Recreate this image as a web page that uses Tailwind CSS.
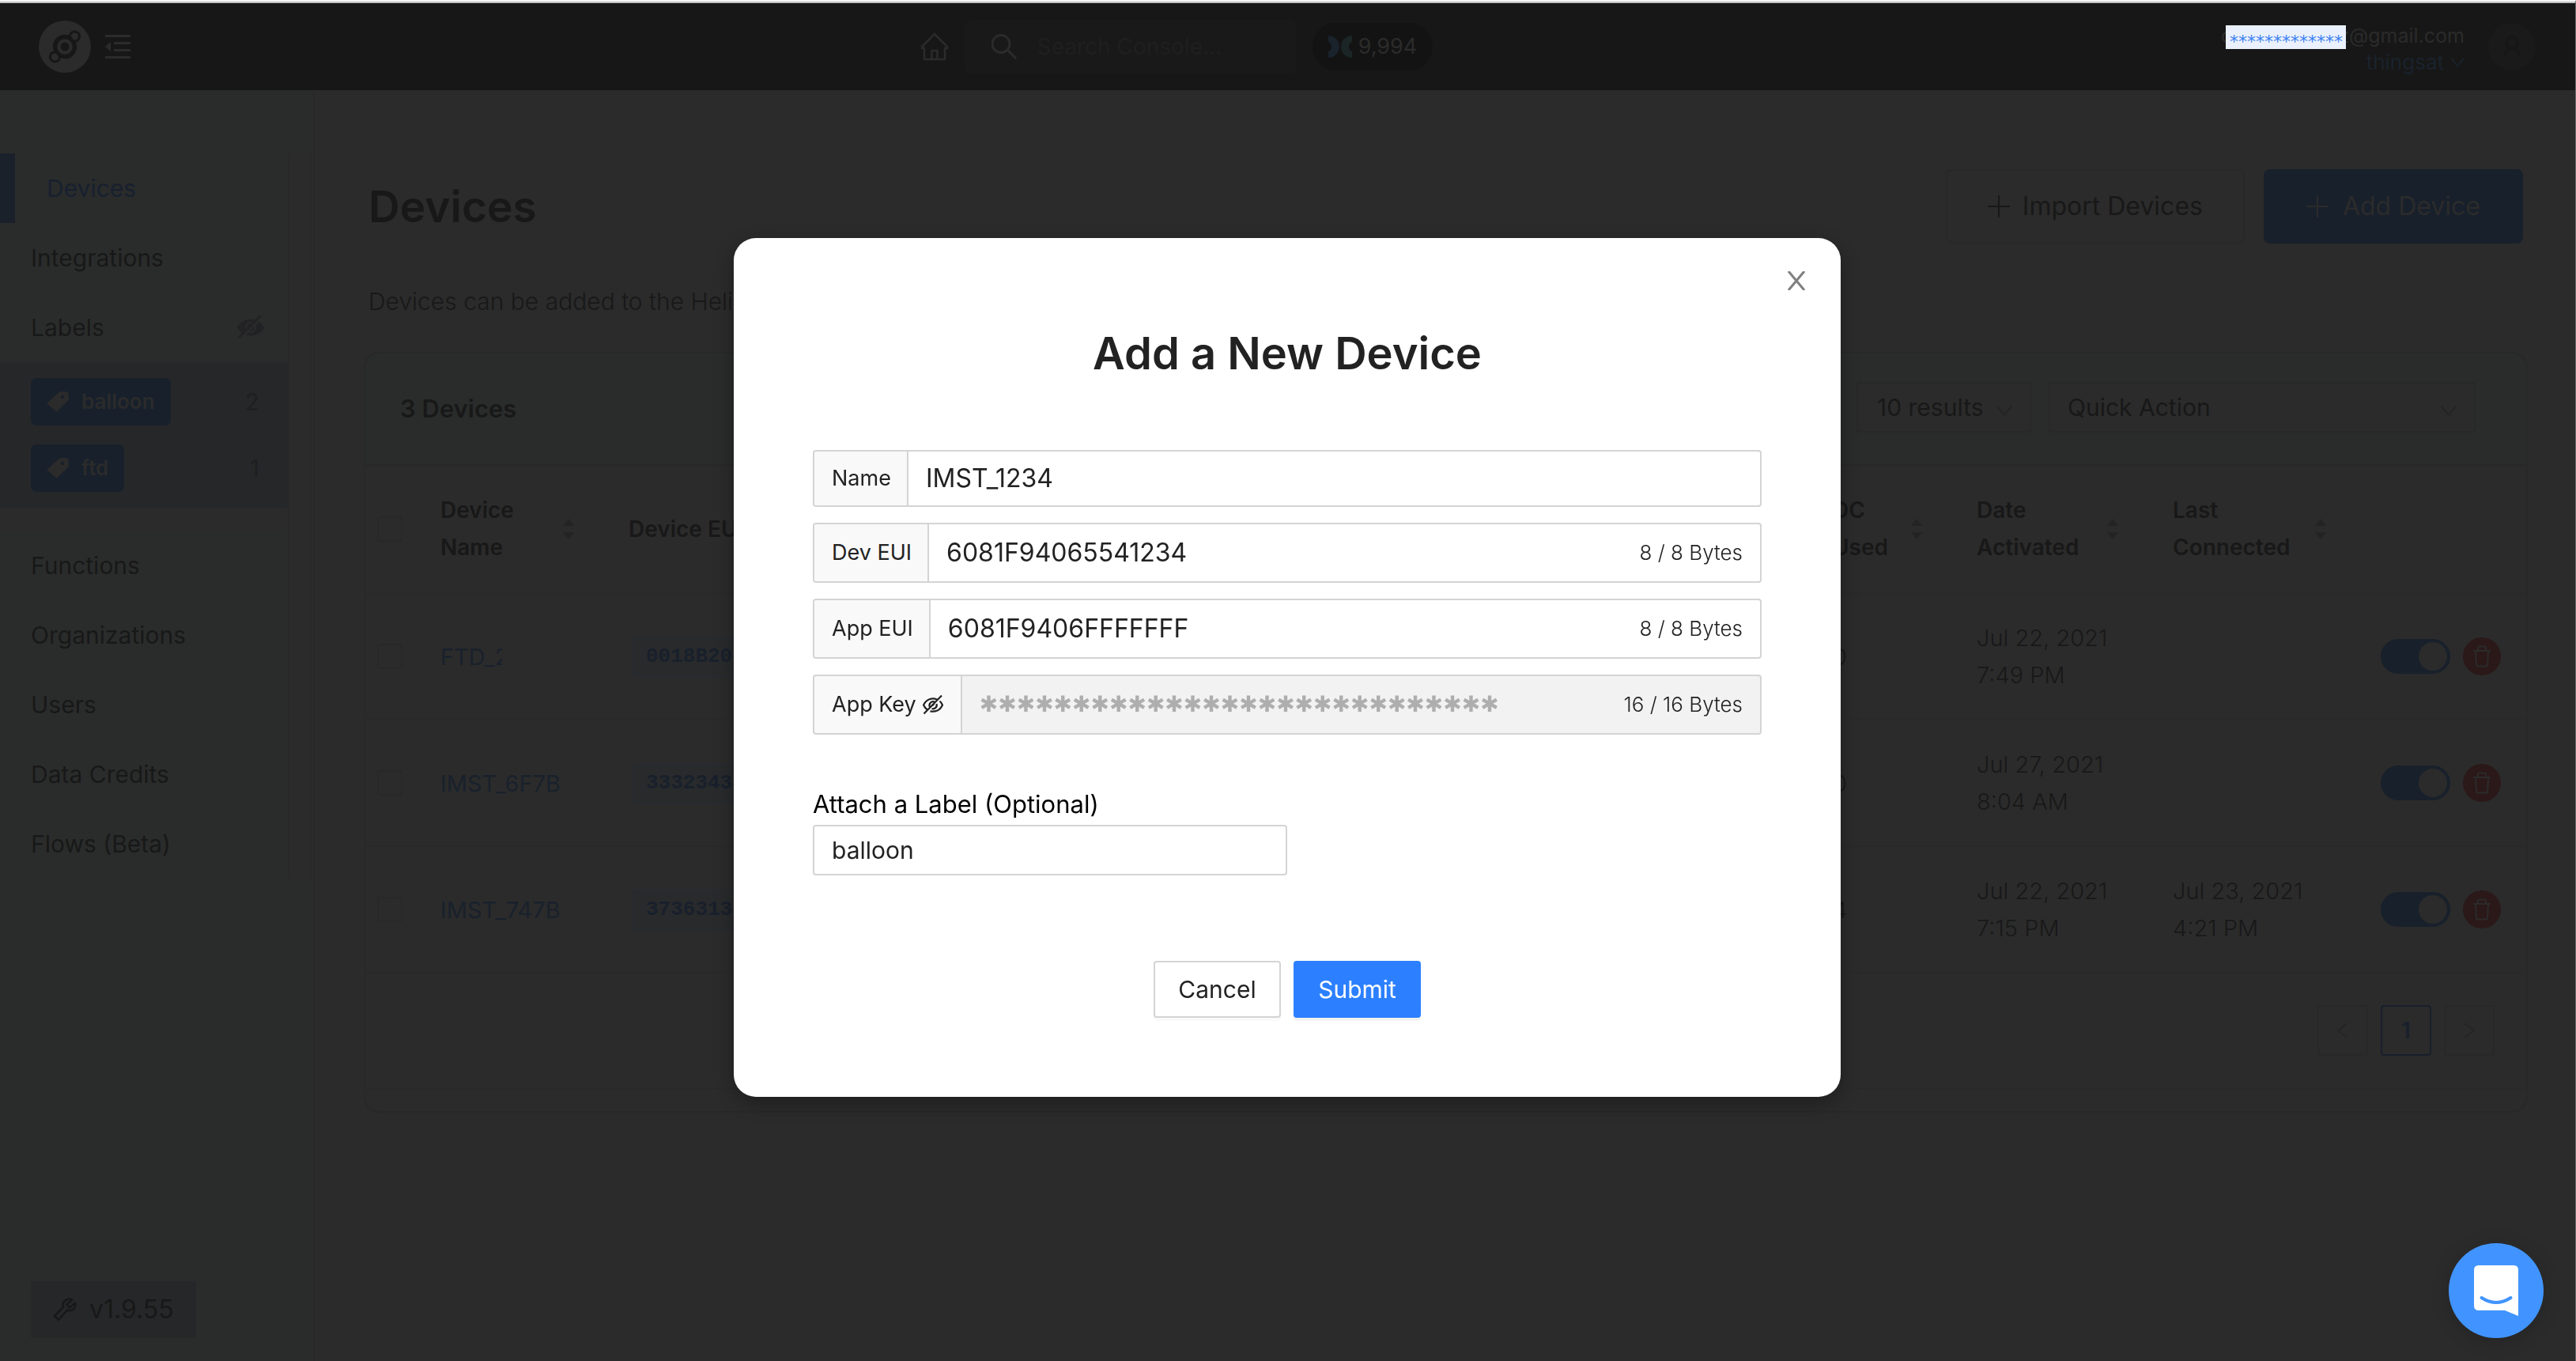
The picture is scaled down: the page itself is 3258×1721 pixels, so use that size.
<!DOCTYPE html>
<html lang="en">
<head>
<meta charset="utf-8">
<title>Console - Devices</title>
<script src="https://cdn.jsdelivr.net/npm/@tailwindcss/browser@4"></script>
</head>
<body class="flex min-h-screen flex-col border-t-2 border-r border-t-[#f4f4f4] border-r-[#6b6b6b] bg-[#2b2b2b] font-['Inter',sans-serif] text-[30px] leading-[48px] text-[#181818]">

<svg class="hidden">
  <symbol id="chevron" viewBox="0 0 20 14"><path d="M1 1l9 11 9-11" fill="none" stroke="currentColor" stroke-width="2"/></symbol>
  <symbol id="sort" viewBox="0 0 14 26"><path d="M7 0l7 9H0zM7 26l7-9H0z" fill="currentColor"/></symbol>
  <symbol id="plus" viewBox="0 0 28 28"><path d="M14 0v28M0 14h28" fill="none" stroke="currentColor" stroke-width="2"/></symbol>
  <symbol id="tag" viewBox="0 0 28 26"><path d="M0 15L15 1.500Q16.500 0 18.500 0L25 .3Q27.500.5 27.600 3L28 9Q28 11 26.500 12.500L12.500 26z" fill="currentColor"/><circle cx="20" cy="7" r="2.200" fill="#18202b"/></symbol>
  <symbol id="trash" viewBox="0 0 24 28"><path d="M7 6V3q0-1.500 1.500-1.500h7Q17 1.500 17 3v3M1 7h22M4 8l1 17q0 1.500 1.500 1.500h11Q19 26.500 19 25l1-17" fill="none" stroke="currentColor" stroke-width="2"/></symbol>
</svg>

<header class="flex h-[112px] shrink-0 items-center justify-between border-t-2 border-[#c0c0c0] bg-[#171717] pr-[50px] pl-[49px]">
  <div class="flex flex-1 items-center gap-[18px]">
    <a href="#" aria-label="Console home">
      <svg class="size-[66px]" viewBox="0 0 66 66"><circle cx="33" cy="33" r="33" fill="#2b2b2b"/><g fill="none" stroke="#171717" stroke-linecap="round"><circle cx="33" cy="33" r="5.500" fill="#171717" stroke="none"/><path d="M40 21.800A13 13 0 0 0 20.600 37M26 44.200A13 13 0 0 0 45.400 29" stroke-width="4"/><circle cx="33" cy="33" r="12" stroke-width="4.500"/><path d="M39.500 19.500c.5-3 2-5 5.200-5.500a6 6 0 0 1 6.500 8c-1 3-3.500 4-6 4M26.500 46.500c-.5 3-2 5-5.200 5.500a6 6 0 0 1-6.500-8c1-3 3.500-4 6-4" stroke-width="3"/></g></svg>
    </a>
    <button type="button" aria-label="Collapse menu" class="text-[#2b2b2b]">
      <svg class="h-[30px] w-8" viewBox="0 0 32 30" fill="currentColor"><path d="M0 0h32v3H0zM11 9h21v3H11zM11 18h21v3H11zM0 27h32v3H0zM0 15l7-6v12z"/></svg>
    </button>
  </div>
  <div class="mr-[280px] flex items-center gap-5">
    <a href="#" aria-label="Home" class="text-[#2b2b2b]">
      <svg class="size-9" viewBox="0 0 36 36" fill="none" stroke="currentColor" stroke-width="2.500"><path d="M5 20H2v-2L18 2l16 16v2h-3v14H5zM14.500 34V23h7v11"/></svg>
    </a>
    <label class="flex h-[68px] w-[420px] items-center gap-[26px] rounded-lg bg-[#191919] pl-[34px]">
      <svg class="size-8 shrink-0 text-[#2b2b2b]" viewBox="0 0 32 32" fill="none" stroke="currentColor" stroke-width="3"><circle cx="12" cy="12.500" r="11"/><path d="M20 20l11 11"/></svg>
      <input type="search" placeholder="Search Console..." class="w-full min-w-0 bg-transparent text-[28px] placeholder:text-[#1f1f1f]">
    </label>
    <div class="flex h-[60px] items-center gap-2 rounded-full bg-[#131313] px-5 text-[27px] text-[#2b2b2b]">
      <svg class="h-7 w-[30px]" viewBox="0 0 30 28"><path d="M0 0a14 14 0 0 1 0 28v-8a6.500 6.500 0 0 0 0-12z" fill="#1a222c"/><path d="M30 0a14 14 0 0 0 0 28v-8a6.500 6.500 0 0 1 0-12z" fill="#1b2526"/></svg>
      9,994
    </div>
  </div>
  <div class="flex flex-1 items-center justify-end gap-[30px]">
    <div class="flex flex-col items-end pt-1.5 text-[26px] leading-[34px]">
      <div class="flex h-[34px] text-[25px] text-[#2b2b2b]">
        <span class="w-[6px] overflow-hidden">c</span>
        <span class="mt-1 flex w-[152px] justify-end bg-[#eaf1fd] pr-1 font-['DejaVu_Sans',sans-serif] text-[22px] leading-[42px] text-[#3b7ff0]">*************</span>
        <span class="flex w-[4px] justify-end overflow-hidden">z</span>
        <span>@gmail.com</span>
      </div>
      <button type="button" class="flex items-center gap-2 text-[#1a222c]">thingsat <svg class="h-3 w-[18px]"><use href="#chevron"/></svg></button>
    </div>
    <button type="button" aria-label="Account" class="flex size-[60px] items-center justify-center rounded-full bg-[#1a1a1a]">
      <svg class="h-7 w-[22px]" viewBox="0 0 22 28" fill="none" stroke="#171717" stroke-width="4"><circle cx="11" cy="9" r="7"/><path d="M2 27c0-6 3-10 9-10s9 4 9 10"/></svg>
    </button>
  </div>
</header>

<div class="flex flex-1">
  <aside class="flex w-[398px] shrink-0 flex-col justify-between border-r-2 border-[#282828] bg-[#2a2c2b] pt-20 pb-[29px]">
    <nav class="mr-[2px] border-r-2 border-[#282828] bg-[#2b2b2b] pr-[26px]">
      <div class="border-r-2 border-[#282828]">
        <ul class="bg-[#2a2c2b]">
          <li><a href="#" class="flex h-[88px] items-center border-l-[19px] border-[#1a212b] pl-10 text-[#18202f]">Devices</a></li>
          <li><a href="#" class="flex h-[88px] items-center pl-[39px]">Integrations</a></li>
          <li class="flex h-[88px] items-center justify-between pr-[30px] pl-[39px]"><a href="#">Labels</a>
            <button type="button" aria-label="Hide labels" class="text-[#222224]"><svg class="h-[30px] w-[34px]" viewBox="0 0 34 30"><path d="M0 15C7 1 27 1 34 15 27 29 7 29 0 15z" fill="currentColor"/><circle cx="17" cy="15" r="6" fill="none" stroke="#2a2c2b" stroke-width="2"/><path d="M5 29L33 1" stroke="#2a2c2b" stroke-width="2"/><path d="M2 28L30 0" stroke="currentColor" stroke-width="3"/></svg></button>
          </li>
        </ul>
        <ul class="flex flex-col gap-6 bg-[#262729] py-5 pr-9 pl-[39px] text-[#1e1f20]">
          <li class="flex items-center justify-between"><a href="#" class="flex h-[60px] items-center gap-4 rounded-[7px] bg-[#18202b] px-5 text-[26px] font-semibold text-[#2b2b2b]"><svg class="h-[26px] w-7"><use href="#tag"/></svg>balloon</a>2</li>
          <li class="flex items-center justify-between"><a href="#" class="flex h-[60px] items-center gap-4 rounded-[7px] bg-[#18202b] px-5 text-[26px] font-semibold text-[#2b2b2b]"><svg class="h-[26px] w-7"><use href="#tag"/></svg>ftd</a>1</li>
        </ul>
        <ul class="mt-[29px] bg-[#2a2c2b]">
          <li><a href="#" class="flex h-[88px] items-center pl-[39px]">Functions</a></li>
          <li><a href="#" class="flex h-[88px] items-center pl-[39px]">Organizations</a></li>
          <li><a href="#" class="flex h-[88px] items-center pl-[39px]">Users</a></li>
          <li><a href="#" class="flex h-[88px] items-center pl-[39px]">Data Credits</a></li>
          <li><a href="#" class="flex h-[88px] items-center pl-[39px]">Flows (Beta)</a></li>
        </ul>
      </div>
    </nav>
    <a href="#" class="ml-[39px] flex h-[72px] items-center gap-4 self-start bg-[#262729] px-7 text-[32px]">
      <svg class="size-[30px]" viewBox="0 0 30 30" fill="none" stroke="currentColor" stroke-width="2.500"><path d="M24 2.500l-6.500 6 3.500 4 7-5.500c1 4-1 8-5 9-2 .5-3.500.3-5-.3L7 28 2 23 13 12c-1-4 0-7 3-9 2.500-1.500 5.500-1.500 8-.5z"/></svg>
      v1.9.55
    </a>
  </aside>

  <main class="min-w-0 flex-1 pt-[100px] pr-[60px] pl-[62px]">
    <div class="flex items-center justify-between pr-[6px] pl-[6px]">
      <h1 class="text-[55px] leading-[92px] font-semibold">Devices</h1>
      <div class="flex gap-6 text-[32px]">
        <button type="button" class="flex h-[94px] items-center gap-4 rounded-lg border-2 border-[#282828] px-[51px]"><svg class="size-7"><use href="#plus"/></svg>Import Devices</button>
        <button type="button" class="flex h-[94px] items-center gap-[18px] rounded-lg bg-[#18202b] px-[54px] text-[#2b2b2b]"><svg class="size-7"><use href="#plus"/></svg>Add Device</button>
      </div>
    </div>
    <p class="mt-[49px] pl-[6px] font-light">Devices can be added to the Heli</p>

    <section class="mt-10 overflow-hidden rounded-[20px] border-2 border-[#282828] pb-7">
      <div class="flex h-[142px] items-center justify-between border-b-2 border-[#282828] bg-[#2a2c2b] pr-16 pl-[44px]">
        <h2 class="text-[31px] font-semibold">3 Devices</h2>
        <div class="flex gap-[22px] pb-1">
          <div class="relative w-[221px]">
            <select aria-label="Results per page" class="h-16 w-full appearance-none rounded border-2 border-[#272828] bg-[#2b2b2b] pl-6"><option>10 results</option></select>
            <svg class="pointer-events-none absolute top-[30px] right-6 h-[14px] w-5 text-[#242424]"><use href="#chevron"/></svg>
          </div>
          <div class="relative w-[540px]">
            <select aria-label="Quick action" class="h-16 w-full appearance-none rounded border-2 border-[#272828] bg-[#2b2b2b] pl-[22px]"><option>Quick Action</option></select>
            <svg class="pointer-events-none absolute top-[30px] right-6 h-[14px] w-5 text-[#242424]"><use href="#chevron"/></svg>
          </div>
        </div>
      </div>

      <table class="w-full table-fixed text-left leading-[47px]">
        <colgroup><col class="w-[63px]"><col class="w-[238px]"><col><col class="w-[182px]"><col class="w-[248px]"><col class="w-[263px]"><col class="w-[216px]"></colgroup>
        <thead class="text-[28px]">
          <tr class="h-[161px] border-b-2 border-[#292929]">
            <th class="pl-[15px]"><input type="checkbox" aria-label="Select all" class="block size-8 appearance-none rounded border-2 border-[#282828]"></th>
            <th class="pr-[37px] pl-8 font-semibold"><div class="flex items-center justify-between"><span>Device<br>Name</span><svg class="h-[26px] w-[14px] text-[#232323]"><use href="#sort"/></svg></div></th>
            <th class="pl-8 font-semibold">Device EUI</th>
            <th class="pr-[37px] pl-8 font-semibold"><div class="flex items-center justify-between"><span>DC<br>Used</span><svg class="h-[26px] w-[14px] text-[#232323]"><use href="#sort"/></svg></div></th>
            <th class="pr-[37px] pl-8 font-semibold"><div class="flex items-center justify-between"><span>Date<br>Activated</span><svg class="h-[26px] w-[14px] text-[#232323]"><use href="#sort"/></svg></div></th>
            <th class="pr-[37px] pl-8 font-semibold"><div class="flex items-center justify-between"><span>Last<br>Connected</span><svg class="h-[26px] w-[14px] text-[#232323]"><use href="#sort"/></svg></div></th>
            <th></th>
          </tr>
        </thead>
        <tbody class="text-[29px] font-light">
          <tr class="h-[160px] border-b-2 border-[#292929]">
            <td class="pl-[15px]"><input type="checkbox" aria-label="Select FTD" class="block size-8 appearance-none rounded border-2 border-[#282828]"></td>
            <td class="pl-8 font-normal"><a href="#" class="block w-[78px] overflow-hidden text-[#19212c]">FTD_2</a></td>
            <td class="pl-9"><code class="inline-block h-[52px] rounded-md border-2 border-[#272a2e] bg-[#292a2c] px-4 font-['Liberation_Mono',monospace] text-[26px] font-bold text-[#18202b]">0018B200</code></td>
            <td class="pl-8">0</td>
            <td class="pl-8">Jul 22, 2021<br>7:49 PM</td>
            <td class="pl-8"></td>
            <td class="pl-8"><div class="flex items-center gap-4"><input type="checkbox" role="switch" aria-label="FTD active" checked class="flex h-11 w-[88px] appearance-none items-center justify-end rounded-full bg-[#18202b] pr-1 before:size-9 before:rounded-full before:bg-[#2b2b2b] before:content-['']"><button type="button" aria-label="Delete FTD" class="flex size-12 items-center justify-center rounded-full bg-[#2b1818] text-[#2b2b2b]"><svg class="h-7 w-6"><use href="#trash"/></svg></button></div></td>
          </tr>
          <tr class="h-[160px] border-b-2 border-[#292929]">
            <td class="pl-[15px]"><input type="checkbox" aria-label="Select IMST_6F7B" class="block size-8 appearance-none rounded border-2 border-[#282828]"></td>
            <td class="pl-8 font-normal"><a href="#" class="text-[#19212c]">IMST_6F7B</a></td>
            <td class="pl-9"><code class="inline-block h-[52px] rounded-md border-2 border-[#272a2e] bg-[#292a2c] px-4 font-['Liberation_Mono',monospace] text-[26px] font-bold text-[#18202b]">33323433</code></td>
            <td class="pl-8">0</td>
            <td class="pl-8">Jul 27, 2021<br>8:04 AM</td>
            <td class="pl-8"></td>
            <td class="pl-8"><div class="flex items-center gap-4"><input type="checkbox" role="switch" aria-label="IMST_6F7B active" checked class="flex h-11 w-[88px] appearance-none items-center justify-end rounded-full bg-[#18202b] pr-1 before:size-9 before:rounded-full before:bg-[#2b2b2b] before:content-['']"><button type="button" aria-label="Delete IMST_6F7B" class="flex size-12 items-center justify-center rounded-full bg-[#2b1818] text-[#2b2b2b]"><svg class="h-7 w-6"><use href="#trash"/></svg></button></div></td>
          </tr>
          <tr class="h-[160px] border-b-2 border-[#292929]">
            <td class="pl-[15px]"><input type="checkbox" aria-label="Select IMST_747B" class="block size-8 appearance-none rounded border-2 border-[#282828]"></td>
            <td class="pl-8 font-normal"><a href="#" class="text-[#19212c]">IMST_747B</a></td>
            <td class="pl-9"><code class="inline-block h-[52px] rounded-md border-2 border-[#272a2e] bg-[#292a2c] px-4 font-['Liberation_Mono',monospace] text-[26px] font-bold text-[#18202b]">37363133</code></td>
            <td class="pl-8">4</td>
            <td class="pl-8">Jul 22, 2021<br>7:15 PM</td>
            <td class="pl-8">Jul 23, 2021<br>4:21 PM</td>
            <td class="pl-8"><div class="flex items-center gap-4"><input type="checkbox" role="switch" aria-label="IMST_747B active" checked class="flex h-11 w-[88px] appearance-none items-center justify-end rounded-full bg-[#18202b] pr-1 before:size-9 before:rounded-full before:bg-[#2b2b2b] before:content-['']"><button type="button" aria-label="Delete IMST_747B" class="flex size-12 items-center justify-center rounded-full bg-[#2b1818] text-[#2b2b2b]"><svg class="h-7 w-6"><use href="#trash"/></svg></button></div></td>
          </tr>
        </tbody>
      </table>

      <div class="flex justify-end gap-4 border-b-2 border-[#292929] pt-10 pr-10 pb-10">
        <button type="button" aria-label="Previous page" class="flex size-16 items-center justify-center rounded border-2 border-[#282828] text-[#252525]"><svg class="h-5 w-[14px]" viewBox="0 0 14 20" fill="none" stroke="currentColor" stroke-width="2"><path d="M13 1L1 10l12 9"/></svg></button>
        <button type="button" class="flex size-16 items-center justify-center rounded border-2 border-[#18202b] text-[28px] font-semibold text-[#18202b]">1</button>
        <button type="button" aria-label="Next page" class="flex size-16 items-center justify-center rounded border-2 border-[#282828] text-[#252525]"><svg class="h-5 w-[14px]" viewBox="0 0 14 20" fill="none" stroke="currentColor" stroke-width="2"><path d="M1 1l12 9-12 9"/></svg></button>
      </div>
    </section>
  </main>
</div>

<div class="fixed inset-0 flex items-start justify-center pt-[301px] pr-[2px]">
  <form role="dialog" aria-labelledby="dialog-title" class="relative w-[1400px] max-w-full rounded-[28px] bg-white px-[100px] pb-[100px] text-[#222] shadow-[0_8px_24px_rgba(0,0,0,0.3)]">
    <button type="button" aria-label="Close" class="absolute top-[42px] right-[45px] text-[#808080]"><svg class="h-6 w-[22px]" viewBox="0 0 22 24" fill="none" stroke="currentColor" stroke-width="3"><path d="M1 0l20 24M21 0L1 24"/></svg></button>
    <h2 id="dialog-title" class="pt-[110px] text-center text-[56px] leading-[72px] font-semibold">Add a New Device</h2>

    <div class="mt-[86px] flex flex-col gap-5 text-[32px]">
      <div class="flex h-[72px] rounded border-2 border-[#d4d4d4]">
        <label for="name" class="flex items-center rounded-l-sm border-r-2 border-[#d4d4d4] bg-[#f9f9f9] pr-5 pl-[22px] text-[27px]">Name</label>
        <input id="name" type="text" value="IMST_1234" class="min-w-0 flex-1 px-[22px]">
      </div>
      <div class="flex h-[76px] rounded border-2 border-[#d4d4d4]">
        <label for="dev-eui" class="flex items-center rounded-l-sm border-r-2 border-[#d4d4d4] bg-[#f9f9f9] pr-5 pl-[22px] text-[27px]">Dev EUI</label>
        <input id="dev-eui" type="text" value="6081F94065541234" class="min-w-0 flex-1 px-[22px]">
        <span class="flex items-center pr-[22px] text-[26px] font-light text-[#222]">8 / 8 Bytes</span>
      </div>
      <div class="flex h-[76px] rounded border-2 border-[#d4d4d4]">
        <label for="app-eui" class="flex items-center rounded-l-sm border-r-2 border-[#d4d4d4] bg-[#f9f9f9] pr-5 pl-[22px] text-[27px]">App EUI</label>
        <input id="app-eui" type="text" value="6081F9406FFFFFFF" class="min-w-0 flex-1 px-[22px]">
        <span class="flex items-center pr-[22px] text-[26px] font-light text-[#222]">8 / 8 Bytes</span>
      </div>
      <div class="flex h-[76px] rounded border-2 border-[#d4d4d4] bg-[#f2f2f2]">
        <div class="flex items-center gap-2 rounded-l-sm border-r-2 border-[#d4d4d4] bg-[#f9f9f9] px-[22px] text-[27px]">
          <label for="app-key">App Key</label>
          <button type="button" aria-label="Show key"><svg class="size-[26px]" viewBox="0 0 26 26" fill="none" stroke="currentColor" stroke-width="2.200"><path d="M6.500 20C4 18.500 2.300 16.500 1 13.500 4.500 6 12 4 18 6.500M21.500 8.500C23 9.800 24.200 11.500 25 13.500 22 20.500 15.500 22.500 9.500 21.300M1.500 24.500L24 1.500"/><path d="M9 16a4.700 4.700 0 0 1 6-6.500M17.500 12a4.700 4.700 0 0 1-6 6"/><path d="M12 14.500l2.500-2.500"/></svg></button>
        </div>
        <input id="app-key" type="text" disabled value="✱✱✱✱✱✱✱✱✱✱✱✱✱✱✱✱✱✱✱✱✱✱✱✱✱✱✱✱" class="min-w-0 flex-1 px-[22px] font-['DejaVu_Sans',sans-serif] text-[28px] font-bold text-[#aeaeae]">
        <span class="flex items-center pr-[22px] text-[26px] font-light text-[#222]">16 / 16 Bytes</span>
      </div>
    </div>

    <label for="label" class="mt-[62px] block text-[31px] leading-[52px] text-black">Attach a Label (Optional)</label>
    <select id="label" class="h-16 w-1/2 appearance-none rounded border-2 border-[#d4d4d4] bg-white px-[22px]"><option>balloon</option></select>

    <div class="mt-[108px] flex justify-center gap-4">
      <button type="button" class="h-[72px] w-[161px] rounded border-2 border-[#d4d4d4] bg-white shadow-[0_4px_0_rgba(0,0,0,0.02)]">Cancel</button>
      <button type="submit" class="h-[72px] w-[161px] rounded bg-[#2c80ff] text-white shadow-[0_4px_0_rgba(0,0,0,0.05)]">Submit</button>
    </div>
  </form>
</div>

<button type="button" aria-label="Open chat" class="fixed right-[41px] bottom-[29px] flex size-[120px] items-center justify-center rounded-full bg-[#4194ff] shadow-[0_4px_24px_rgba(0,0,0,0.15)]">
  <svg class="h-16 w-14" viewBox="0 0 56 64"><path d="M6 0h44q6 0 6 6v58L39 57H6q-6 0-6-6V6q0-6 6-6z" fill="#fff"/><path d="M9.500 41q18.500 12 37 0" fill="none" stroke="#4194ff" stroke-width="4" stroke-linecap="round"/></svg>
</button>
</body>
</html>
